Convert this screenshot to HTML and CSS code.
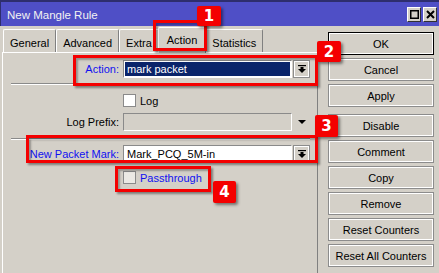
FILE: index.html
```html
<!DOCTYPE html>
<html>
<head>
<meta charset="utf-8">
<link rel="stylesheet" href="styles.css">
</head>
<body>
<div class="window">
  <div class="titlebar">
    <span class="ttl">New Mangle Rule</span>
    <span class="tbtn"><svg width="9" height="9" viewBox="0 0 9 9"><rect x="0.75" y="0.75" width="7.5" height="7.5" fill="none" stroke="#000" stroke-width="1.5"/></svg></span>
    <span class="tbtn"><svg width="9" height="9" viewBox="0 0 9 9"><path d="M1 1L8 8M8 1L1 8" stroke="#000" stroke-width="2"/></svg></span>
  </div>
  <div class="content">
    <div class="main">
      <div class="tabs">
        <div class="tab">General</div>
        <div class="tab">Advanced</div>
        <div class="tab">Extra</div>
        <div class="tab sel">Action</div>
        <div class="tab">Statistics</div>
      </div>
      <div class="panel">
        <div class="row first">
          <div class="lbl blue">Action:</div>
          <div class="field selfield">mark packet</div>
          <div class="ddbtn"><svg width="8" height="8" viewBox="0 0 8 8"><rect x="0" y="0" width="8" height="1.2"/><rect x="2.5" y="2" width="3" height="2"/><path d="M0 4h8L4 8z"/></svg></div>
        </div>
        <div class="sep s1"></div>
        <div class="row crow c1">
          <div class="lbl"></div>
          <span class="cb"></span><span class="cbtext">Log</span>
        </div>
        <div class="row r3">
          <div class="lbl">Log Prefix:</div>
          <div class="field disabled"></div>
          <svg class="tri" width="8" height="4" viewBox="0 0 8 4"><path d="M0 0h8L4 4z"/></svg>
        </div>
        <div class="sep s2"></div>
        <div class="row r4">
          <div class="lbl blue">New Packet Mark:</div>
          <div class="field">Mark_PCQ_5M-in</div>
          <div class="ddbtn"><svg width="8" height="8" viewBox="0 0 8 8"><rect x="0" y="0" width="8" height="1.2"/><rect x="2.5" y="2" width="3" height="2"/><path d="M0 4h8L4 8z"/></svg></div>
        </div>
        <div class="row crow c2">
          <div class="lbl"></div>
          <span class="cb grey"></span><span class="cbtext blue">Passthrough</span>
        </div>
      </div>
    </div>
    <div class="side">
      <div class="btn default">OK</div>
      <div class="btn">Cancel</div>
      <div class="btn">Apply</div>
      <div class="btn gap">Disable</div>
      <div class="btn">Comment</div>
      <div class="btn">Copy</div>
      <div class="btn">Remove</div>
      <div class="btn">Reset Counters</div>
      <div class="btn">Reset All Counters</div>
    </div>
  </div>

  <div class="ann a1"></div>
  <div class="ann a2"></div>
  <div class="ann a3"></div>
  <div class="ann a4"></div>
  <div class="badge b1">1</div>
  <div class="badge b2">2</div>
  <div class="badge b3">3</div>
  <div class="badge b4">4</div>
</div>
</body>
</html>
```
FILE: styles.css
```css
html, body {
  margin: 0;
  padding: 0;
  background: #d4d0c8;
}
body {
  font-family: "Liberation Sans", Arial, sans-serif;
  font-size: 11px;
  color: #000;
}
.window {
  position: relative;
  width: 439px;
  height: 273px;
  overflow: hidden;
  display: flex;
  flex-direction: column;
  background: #d4d0c8;
}
.titlebar {
  height: 26px;
  box-sizing: border-box;
  border-top: 2px solid #2e2e6e;
  border-left: 1px solid #2e2e6e;
  background: #4f4fc6;
  display: flex;
  align-items: center;
  padding-left: 6px;
  padding-right: 2px;
  color: #f2f2f2;
  font-size: 11.5px;
}
.ttl {
  flex: 1;
  padding-top: 1px;
}
.tbtn {
  width: 14px;
  height: 15px;
  box-sizing: border-box;
  margin-left: 2px;
  background: #d4d0c8;
  border: 1px solid;
  border-color: #fff #303030 #303030 #fff;
  display: flex;
  align-items: center;
  justify-content: center;
}
.content {
  flex: 1;
  display: flex;
}
.main {
  width: 318px;
  display: flex;
  flex-direction: column;
}
.tabs {
  height: 26px;
  display: flex;
  align-items: flex-end;
  padding-left: 3px;
  position: relative;
  z-index: 1;
}
.tab {
  height: 23px;
  box-sizing: border-box;
  padding: 3px 6px 0;
  display: flex;
  align-items: center;
  border-top: 1px solid #fff;
  border-left: 1px solid #fff;
  border-right: 1px solid #808080;
  border-radius: 2px 2px 0 0;
}
.tab.sel {
  height: 26px;
  margin: 0 -1px -1px -1px;
  padding: 0 8px 1px;
  background: #d4d0c8;
  position: relative;
  z-index: 2;
}
.panel {
  flex: 1;
  margin-left: 2px;
  border-top: 1px solid #fff;
  border-left: 1px solid #fff;
  border-right: 1px solid #808080;
  padding-top: 7px;
}
.row {
  display: flex;
  align-items: center;
  height: 18px;
}
.lbl {
  width: 120px;
  box-sizing: border-box;
  padding-right: 4px;
  text-align: right;
  white-space: nowrap;
}
.blue {
  color: #1010f0;
}
.field {
  width: 169px;
  height: 18px;
  box-sizing: border-box;
  border: 1px solid;
  border-color: #8a8a8a #ffffff #ffffff #8a8a8a;
  background: #fff;
  padding-left: 3px;
  display: flex;
  align-items: center;
  white-space: nowrap;
}
.selfield {
  background: #0a246a;
  color: #fff;
  box-shadow: inset 0 0 0 1px #fff;
}
.field.disabled {
  background: #d4d0c8;
}
.ddbtn {
  width: 17px;
  height: 18px;
  box-sizing: border-box;
  margin-left: 1px;
  border: 1px solid #8c8c8c;
  box-shadow: inset 1px 1px #fff, inset -1px -1px #fff;
  display: flex;
  align-items: center;
  justify-content: center;
}
.tri {
  margin-left: 6px;
}
.sep {
  margin: 0 7px 0 8px;
  border-top: 1px solid #8a8a8a;
  border-bottom: 1px solid #fff;
}
.s1 { margin-top: 5px; }
.s2 { margin-top: 7px; }
.crow { height: 13px; }
.c1 { margin-top: 9px; }
.c2 { margin-top: 8px; }
.r3 { margin-top: 6px; }
.r4 { margin-top: 5px; }
.cb {
  width: 13px;
  height: 13px;
  box-sizing: border-box;
  border: 1px solid #8a8a8a;
  background: #fff;
}
.cb.grey {
  background: #ebe9e4;
}
.cbtext {
  margin-left: 4px;
}
.side {
  flex: 1;
  padding: 6px 5px 0 10px;
  display: flex;
  flex-direction: column;
  gap: 3px;
}
.btn {
  width: 106px;
  height: 23px;
  box-sizing: border-box;
  border: 1px solid #8c8c8c;
  box-shadow: inset 0 0 0 1px #fff;
  display: flex;
  align-items: center;
  justify-content: center;
  white-space: nowrap;
}
.btn.default {
  border-color: #000;
}
.btn.gap {
  margin-top: 4px;
}
.ann {
  position: absolute;
  box-sizing: border-box;
  border: 3px solid #f40000;
  box-shadow: 2px 2px 2px rgba(0, 0, 0, 0.4), inset 2px 2px 2px rgba(0, 0, 0, 0.3);
  z-index: 5;
}
.a1 { left: 153px; top: 20px; width: 54px; height: 31px; }
.a2 { left: 73px; top: 55px; width: 245px; height: 31px; }
.a3 { left: 26px; top: 135px; width: 292px; height: 28px; }
.a4 { left: 115px; top: 166px; width: 96px; height: 26px; }
.badge {
  position: absolute;
  z-index: 6;
  background: #f40000;
  color: #fff;
  font-family: "DejaVu Sans", sans-serif;
  font-weight: bold;
  font-size: 15px;
  display: flex;
  align-items: center;
  justify-content: center;
  border-radius: 2px;
  box-shadow: 2px 2px 3px rgba(0, 0, 0, 0.45);
}
.b1 { left: 197px; top: 6px; width: 24px; height: 20px; }
.b2 { left: 317px; top: 41px; width: 24px; height: 21px; }
.b3 { left: 315px; top: 115px; width: 23px; height: 22px; }
.b4 { left: 213px; top: 181px; width: 23px; height: 22px; }
```
